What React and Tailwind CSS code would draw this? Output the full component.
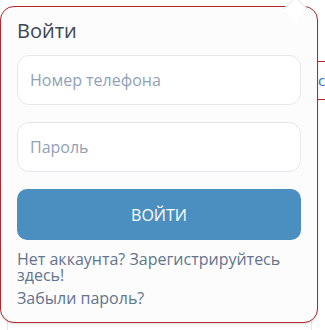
export default function App() {
  return (
    <div className="relative w-[325px] h-[330px] bg-white overflow-hidden" style={{ fontFamily: '"Open Sans", sans-serif' }}>
      {/* page behind the popover */}
      <div className="absolute left-[317px] top-[61px] w-[40px] h-[39px] border-y border-[#b3262b] flex items-center pl-[1px] text-[15px] text-[#3b6fb6]">
        c
      </div>
      <div className="absolute left-[7px] top-[312px] w-[305px] h-[40px] border border-gray-200 rounded bg-white" />

      {/* popover */}
      <div className="absolute left-0 top-[6px] w-[318px] h-[317px] rounded-[14px] border border-[#b3262b] bg-[#fcfcfc] shadow-sm">
        <div className="absolute left-[286px] top-[-7px] w-[17px] h-[17px] rotate-45 bg-white border-l border-t border-gray-200" />
        <div className="relative flex flex-col px-4 pt-[10px]">
          <h2 className="text-[20px] leading-[28px] text-[#3d4656]">Войти</h2>
          <input
            className="mt-[10px] h-[50px] w-[284px] rounded-xl border border-gray-200 bg-white px-3 text-[16px] text-gray-700 placeholder:text-slate-400 outline-none"
            placeholder="Номер телефона"
          />
          <input
            type="password"
            className="mt-[17px] h-[50px] w-[284px] rounded-xl border border-gray-200 bg-white px-3 text-[16px] text-gray-700 placeholder:text-slate-400 outline-none"
            placeholder="Пароль"
          />
          <button className="mt-[17px] h-[51px] w-[284px] rounded-[10px] bg-[#4a8fc0] text-[16px] text-white">
            ВОЙТИ
          </button>
          <p className="mt-[11px] text-[16px] leading-[16px] text-slate-500">
            Нет аккаунта? Зарегистрируйтесь здесь!
          </p>
          <p className="mt-[5px] text-[16px] leading-[20px] text-slate-500">Забыли пароль?</p>
        </div>
      </div>
    </div>
  )
}
